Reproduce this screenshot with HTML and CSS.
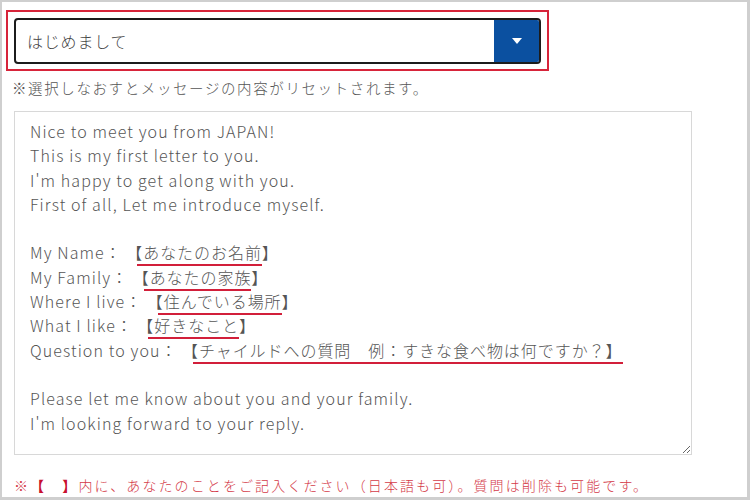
FILE: index.html
```html
<!DOCTYPE html>
<html lang="ja">
<head>
<meta charset="utf-8">
<link rel="stylesheet" href="styles.css">
</head>
<body>
<div class="frame">
  <div class="highlight">
    <div class="select">
      <div class="select-text">はじめまして</div>
      <div class="select-btn"><span class="caret"></span></div>
    </div>
  </div>
  <p class="note">※選択しなおすとメッセージの内容がリセットされます。</p>
  <div class="letter">
    <div class="line">Nice to meet you from JAPAN!</div>
    <div class="line">This is my first letter to you.</div>
    <div class="line">I'm happy to get along with you.</div>
    <div class="line">First of all, Let me introduce myself.</div>
    <div class="line">&nbsp;</div>
    <div class="line">My Name<span class="jp">： 【<span class="mark">あなたのお名前</span>】</span></div>
    <div class="line">My Family<span class="jp">： 【<span class="mark">あなたの家族</span>】</span></div>
    <div class="line">Where I live<span class="jp">： 【<span class="mark">住んでいる場所</span>】</span></div>
    <div class="line">What I like<span class="jp">： 【<span class="mark">好きなこと</span>】</span></div>
    <div class="line">Question to you<span class="jp">： 【<span class="mark">チャイルドへの質問　例：すきな食べ物は何ですか？】</span></span></div>
    <div class="line">&nbsp;</div>
    <div class="line">Please let me know about you and your family.</div>
    <div class="line">I'm looking forward to your reply.</div>
  </div>
  <p class="warn">※<b class="br">【</b>　<b class="br">】</b>内に、あなたのことをご記入ください（日本語も可）。質問は削除も可能です。</p>
</div>
</body>
</html>
```

FILE: styles.css
```css
html, body {
  margin: 0;
  padding: 0;
  background: #fff;
}
body {
  font-family: "Noto Sans CJK JP", "Noto Sans", sans-serif;
  color: #555;
}
.frame {
  width: 750px;
  height: 500px;
  box-sizing: border-box;
  border-style: solid;
  border-color: #cfcfcf;
  border-width: 2px 3px 3px 2px;
  padding: 8px 0 0 4px;
  overflow: hidden;
}
.highlight {
  width: 543px;
  height: 61px;
  box-sizing: border-box;
  border: 2px solid #d7243a;
  padding: 6px 6px 5px 6px;
}
.select {
  display: flex;
  height: 46px;
  box-sizing: border-box;
  border: 2px solid #1c1c1c;
  border-radius: 4px;
  overflow: hidden;
}
.select-text {
  flex: 1;
  display: flex;
  align-items: center;
  padding-left: 11px;
  font-size: 16px;
  font-weight: 300;
  letter-spacing: 0.05em;
  color: #444;
}
.select-btn {
  width: 45px;
  background: #0b50a0;
  display: flex;
  align-items: center;
  justify-content: center;
}
.caret {
  width: 0;
  height: 0;
  border-left: 5px solid transparent;
  border-right: 5px solid transparent;
  border-top: 6px solid #fff;
}
.note {
  margin: 7px 0 0 6px;
  font-size: 14.5px;
  font-weight: 300;
  line-height: 20px;
  letter-spacing: 1.6px;
  color: #555;
}
.letter {
  margin: 13px 0 0 8px;
  width: 678px;
  height: 344px;
  box-sizing: border-box;
  border: 1px solid #d8d8d8;
  padding: 7px 15px 0 15px;
  font-size: 16px;
  font-weight: 300;
  line-height: 24.3px;
  letter-spacing: 1.1px;
  color: #555;
  resize: both;
  overflow: auto;
}
.line {
  white-space: nowrap;
}
.jp {
  letter-spacing: 0.95px;
}
.mark {
  border-bottom: 2px solid #d21f3a;
  margin-left: -6px;
  padding-left: 6px;
}
.warn {
  margin: 20px 0 0 8px;
  font-size: 14px;
  font-weight: 300;
  line-height: 20px;
  letter-spacing: 2.1px;
  color: #d43a48;
}
.br {
  color: #c8102e;
  font-weight: 700;
}
```
